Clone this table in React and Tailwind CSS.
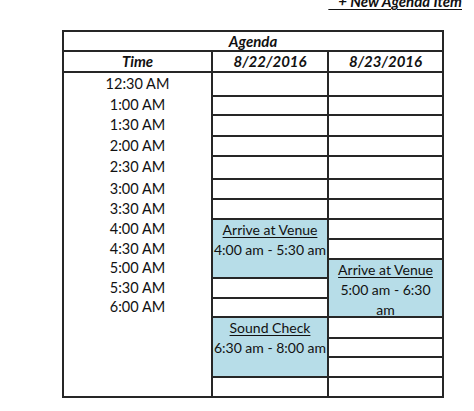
import React from 'react';

const times = [
  '12:30 AM', '1:00 AM', '1:30 AM', '2:00 AM', '2:30 AM', '3:00 AM',
  '3:30 AM', '4:00 AM', '4:30 AM', '5:00 AM', '5:30 AM', '6:00 AM',
  '', '', '', '',
];

// events per day column, start = slot index, span = slot count
const days = [
  {
    label: '8/22/2016',
    events: [
      { start: 7, span: 3, title: 'Arrive at Venue', lines: ['4:00 am - 5:30 am'] },
      { start: 12, span: 3, title: 'Sound Check', lines: ['6:30 am - 8:00 am'] },
    ],
  },
  {
    label: '8/23/2016',
    events: [
      { start: 9, span: 3, title: 'Arrive at Venue', lines: ['5:00 am - 6:30', 'am'] },
    ],
  },
];

function covered(day, i) {
  return day.events.some((e) => i > e.start && i < e.start + e.span);
}

function cellFor(day, i, key) {
  const ev = day.events.find((e) => e.start === i);
  if (ev) {
    return (
      <div key={key} className="row-span-3 bg-[#b7dde8] text-center text-[14px] leading-[20px] whitespace-nowrap">
        <div className="underline underline-offset-2">{ev.title}</div>
        {ev.lines.map((l) => (
          <div key={l}>{l}</div>
        ))}
      </div>
    );
  }
  if (covered(day, i)) return null;
  return <div key={key} className="bg-white" />;
}

export default function App() {
  const cells = [];
  times.forEach((_, i) => {
    days.forEach((day, d) => {
      const c = cellFor(day, i, `${i}-${d}`);
      if (c) cells.push(c);
    });
  });

  return (
    <div className="min-h-screen bg-white text-[14.5px] text-[#111] font-['Lato',_sans-serif]">
      {/* link at the top, cut by the window edge */}
      <div className="flex h-[30px] items-start justify-end pr-[12px]">
        <span className="-mt-[9px] text-[15px] font-bold italic leading-[20px] underline underline-offset-2 whitespace-pre">
          {'   + New Agenda Item'}
        </span>
      </div>

      <div className="ml-[62px] grid w-[382px] grid-cols-[147px_114px_113px] grid-rows-[18px_19px_22px_17px_19px_18px_21px_18px_18px_18px_18px_17px_18px_17px_19px_17px_18px_18px] gap-[2px] bg-[#262626] p-[2px]">
        <div className="col-span-3 flex items-center justify-center bg-white text-[15px] font-bold italic leading-none">
          Agenda
        </div>
        <div className="flex items-center justify-center bg-white text-[15px] font-bold italic leading-none">Time</div>
        {days.map((day) => (
          <div key={day.label} className="flex items-center justify-center bg-white text-[15px] font-bold italic leading-none">
            {day.label}
          </div>
        ))}

        <div className="row-span-16 grid grid-rows-[22px_17px_19px_18px_21px_18px_18px_18px_18px_17px_18px_17px_19px_17px_18px_18px] gap-[2px] bg-white">
          {times.map((t, i) => (
            <div key={i} className="flex items-center justify-center leading-none">
              {t}
            </div>
          ))}
        </div>

        {cells}
      </div>
    </div>
  );
}
